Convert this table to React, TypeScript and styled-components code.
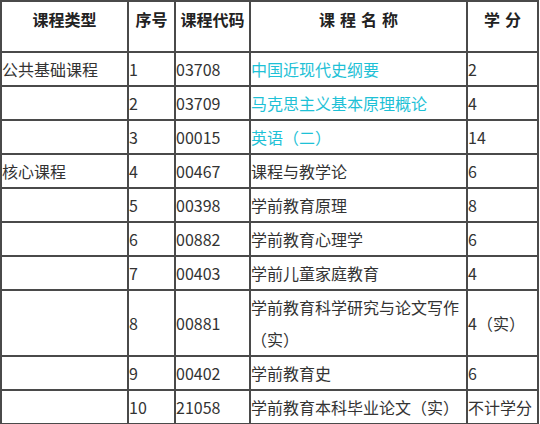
import { createGlobalStyle } from "styled-components";
import styled from "styled-components";

// ================= Global =================
const GlobalStyle = createGlobalStyle`
  html, body {
    margin: 0;
    padding: 0;
    background: #ffffff;
  }
  body {
    font-family: "Noto Sans CJK SC", "Noto Sans", sans-serif;
    color: #333333;
  }
`;

// ================= Styled Components =================
const Table = styled.table`
  border-collapse: collapse;
  width: 539px;
  table-layout: fixed;
  font-size: 16px;
`;

const HeadCell = styled.th<{ $spacing?: number }>`
  border: 2px solid #4a4a4a;
  height: 48px;
  padding: 1px 0 0 ${(p) => p.$spacing ?? 0}px;
  vertical-align: top;
  line-height: 32px;
  font-weight: bold;
  color: #222222;
  text-align: center;
  letter-spacing: ${(p) => p.$spacing ?? 0}px;
  white-space: nowrap;
`;

const Cell = styled.td`
  border: 2px solid #4a4a4a;
  height: 32px;
  padding: 0;
  line-height: 32px;
  vertical-align: middle;
  text-align: left;
  color: #333333;
`;

const LinkText = styled.span`
  color: #1ec1d6;
`;

// ================= Data =================
type Course = {
  type: string;
  no: string;
  code: string;
  name: string;
  credit: string;
  link?: boolean;
};

const courses: Course[] = [
  { type: "公共基础课程", no: "1", code: "03708", name: "中国近现代史纲要", credit: "2", link: true },
  { type: "", no: "2", code: "03709", name: "马克思主义基本原理概论", credit: "4", link: true },
  { type: "", no: "3", code: "00015", name: "英语（二）", credit: "14", link: true },
  { type: "核心课程", no: "4", code: "00467", name: "课程与教学论", credit: "6" },
  { type: "", no: "5", code: "00398", name: "学前教育原理", credit: "8" },
  { type: "", no: "6", code: "00882", name: "学前教育心理学", credit: "6" },
  { type: "", no: "7", code: "00403", name: "学前儿童家庭教育", credit: "4" },
  { type: "", no: "8", code: "00881", name: "学前教育科学研究与论文写作（实）", credit: "4（实）" },
  { type: "", no: "9", code: "00402", name: "学前教育史", credit: "6" },
  { type: "", no: "10", code: "21058", name: "学前教育本科毕业论文（实）", credit: "不计学分" },
];

// ================= App =================
const App = () => {
  return (
    <>
      <GlobalStyle />
      <Table>
        <colgroup>
          <col style={{ width: 127 }} />
          <col style={{ width: 47 }} />
          <col style={{ width: 75 }} />
          <col style={{ width: 217 }} />
          <col style={{ width: 71 }} />
        </colgroup>
        <thead>
          <tr>
            <HeadCell>课程类型</HeadCell>
            <HeadCell>序号</HeadCell>
            <HeadCell>课程代码</HeadCell>
            <HeadCell $spacing={5}>课程名称</HeadCell>
            <HeadCell $spacing={5}>学分</HeadCell>
          </tr>
        </thead>
        <tbody>
          {courses.map((c) => (
            <tr key={c.no}>
              <Cell>{c.type}</Cell>
              <Cell>{c.no}</Cell>
              <Cell>{c.code}</Cell>
              <Cell>{c.link ? <LinkText>{c.name}</LinkText> : c.name}</Cell>
              <Cell>{c.credit}</Cell>
            </tr>
          ))}
        </tbody>
      </Table>
    </>
  );
};

export default App;
